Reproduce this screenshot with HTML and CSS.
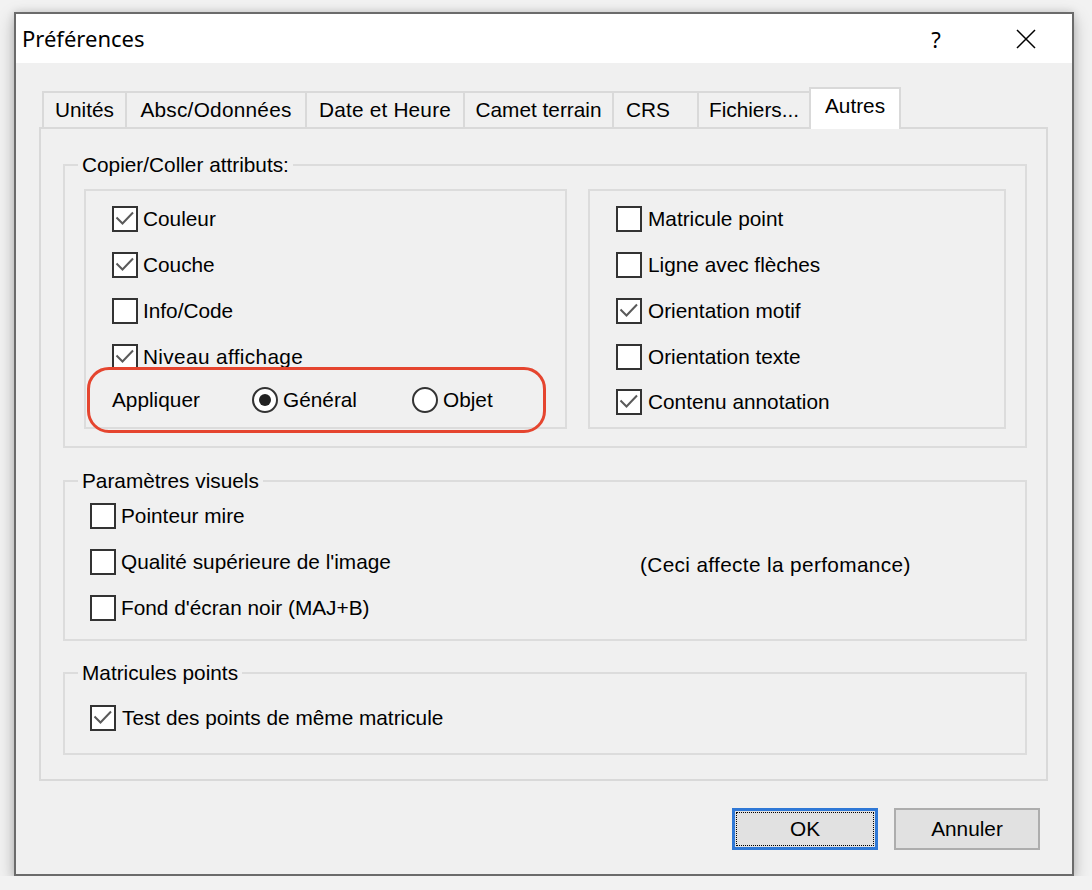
FILE: index.html
```html
<!DOCTYPE html>
<html lang="fr">
<head>
<meta charset="utf-8">
<title>Préférences</title>
<link rel="stylesheet" href="styles.css">
</head>
<body>
<div class="window">
  <div class="titlebar">
    <span class="title">Préférences</span>
    <span class="help">?</span>
    <svg class="close" width="20" height="20" viewBox="0 0 20 20"><path d="M1 1 L19 19 M19 1 L1 19" stroke="#000" stroke-width="1.5" fill="none"/></svg>
  </div>
  <div class="client">
    <div class="tabs">
      <div class="tab t-units">Unités</div>
      <div class="tab t-absc">Absc/Odonnées</div>
      <div class="tab t-date">Date et Heure</div>
      <div class="tab t-carnet">Camet terrain</div>
      <div class="tab t-crs">CRS</div>
      <div class="tab t-files">Fichiers...</div>
      <div class="tab t-other active">Autres</div>
    </div>
    <div class="panel">
      <fieldset class="group">
        <legend>Copier/Coller attributs:</legend>
        <div class="g1-body">
          <div class="subbox sub-left">
            <div class="row"><span class="cb checked"><svg viewBox="0 0 22 22"><path d="M2.5 9.5 L8.5 15.5 L19 4.5"/></svg></span><span>Couleur</span></div>
            <div class="row"><span class="cb checked"><svg viewBox="0 0 22 22"><path d="M2.5 9.5 L8.5 15.5 L19 4.5"/></svg></span><span>Couche</span></div>
            <div class="row"><span class="cb"></span><span>Info/Code</span></div>
            <div class="row"><span class="cb checked"><svg viewBox="0 0 22 22"><path d="M2.5 9.5 L8.5 15.5 L19 4.5"/></svg></span><span class="wide">Niveau affichage</span></div>
            <div class="apply-row">
              <span class="apply-label">Appliquer</span>
              <span class="radio-opt opt-general"><span class="rb on"></span><span>Général</span></span>
              <span class="radio-opt"><span class="rb"></span><span>Objet</span></span>
            </div>
            <div class="highlight"></div>
          </div>
          <div class="subbox sub-right">
            <div class="row"><span class="cb"></span><span>Matricule point</span></div>
            <div class="row"><span class="cb"></span><span>Ligne avec flèches</span></div>
            <div class="row"><span class="cb checked"><svg viewBox="0 0 22 22"><path d="M2.5 9.5 L8.5 15.5 L19 4.5"/></svg></span><span>Orientation motif</span></div>
            <div class="row"><span class="cb"></span><span>Orientation texte</span></div>
            <div class="row row-last"><span class="cb checked"><svg viewBox="0 0 22 22"><path d="M2.5 9.5 L8.5 15.5 L19 4.5"/></svg></span><span>Contenu annotation</span></div>
          </div>
        </div>
      </fieldset>
      <fieldset class="group group-visual">
        <legend>Paramètres visuels</legend>
        <div class="g2-body">
          <div class="row"><span class="cb"></span><span>Pointeur mire</span></div>
          <div class="row">
            <span class="row-main"><span class="cb"></span><span>Qualité supérieure de l'image</span></span>
            <span class="note">(Ceci affecte la perfomance)</span>
          </div>
          <div class="row"><span class="cb"></span><span>Fond d'écran noir (MAJ+B)</span></div>
        </div>
      </fieldset>
      <fieldset class="group group-points">
        <legend>Matricules points</legend>
        <div class="g3-body">
          <div class="row row-test"><span class="cb checked"><svg viewBox="0 0 22 22"><path d="M2.5 9.5 L8.5 15.5 L19 4.5"/></svg></span><span>Test des points de même matricule</span></div>
        </div>
      </fieldset>
    </div>
    <div class="buttons">
      <button class="btn btn-default"><span>OK</span></button>
      <button class="btn">Annuler</button>
    </div>
  </div>
</div>
</body>
</html>
```
FILE: styles.css
```css
* { box-sizing: border-box; }

body {
  margin: 0;
  background: #f2f2f2;
  font-family: "Liberation Sans", Arial, sans-serif;
  font-size: 20.8px;
  color: #000;
}

.window {
  margin: 12px 0 0 14px;
  width: 1060px;
  height: 864px;
  border: 2px solid #6b6b6b;
  background: #f0f0f0;
  box-shadow: 0 6px 16px rgba(0, 0, 0, 0.25), 0 0 8px rgba(0, 0, 0, 0.12);
  display: flex;
  flex-direction: column;
}

.titlebar {
  height: 49px;
  flex: none;
  background: #fff;
  display: flex;
  align-items: center;
  padding-left: 6px;
}

.title {
  flex: 1;
  font-family: "Noto Sans", "Open Sans", sans-serif;
  font-size: 22px;
  padding-bottom: 1px;
}

.help {
  width: 20px;
  text-align: center;
  font-family: "Noto Sans", sans-serif;
  font-size: 22px;
  margin-right: 70px;
}

.close {
  margin-right: 36px;
}

.client {
  flex: 1;
  padding: 24px 24px 0 23px;
  display: flex;
  flex-direction: column;
}

.tabs {
  display: flex;
  align-items: flex-end;
  height: 40px;
  padding-left: 3px;
  position: relative;
  z-index: 1;
}

.tab {
  height: 36px;
  border: 2px solid #d9d9d9;
  border-bottom: 0;
  background: #f0f0f0;
  display: flex;
  align-items: center;
  justify-content: center;
  margin-left: -2px;
  white-space: nowrap;
  padding-bottom: 1px;
}

.t-units { margin-left: 0; width: 85px; }
.t-absc { width: 182px; letter-spacing: 0.25px; }
.t-date { width: 160px; letter-spacing: 0.2px; }
.t-carnet { width: 151px; }
.t-crs { width: 87px; padding-right: 15px; }
.t-files { width: 114px; }
.t-other { width: 92px; }

.tab.active {
  height: 42px;
  margin-bottom: -2px;
  background: #fff;
  padding-bottom: 7px;
}

.panel {
  height: 654px;
  border: 2px solid #d9d9d9;
  background: #f0f0f0;
  padding: 24px 19px 24px 22px;
}

.group {
  margin: 0;
  padding: 0;
  border: 2px solid #dcdcdc;
  min-width: 0;
}

.group legend {
  margin-left: 13px;
  padding: 0 4px;
  line-height: 24px;
}

.group-visual { margin-top: 21px; }
.group-points { margin-top: 20px; }

.g1-body {
  display: grid;
  grid-template-columns: 483px 418px;
  column-gap: 21px;
  padding: 12px 19px 17px 19px;
}

.subbox {
  height: 240px;
  border: 2px solid #dcdcdc;
  padding: 5px 0 0 26px;
  position: relative;
}

.row {
  display: flex;
  align-items: center;
  height: 46px;
  gap: 5px;
  white-space: nowrap;
}

.sub-right .row { gap: 6px; }
.sub-right .row-last { height: 44px; }
.row-test { gap: 6px; }

.wide { letter-spacing: 0.35px; }

.cb {
  width: 26px;
  height: 26px;
  flex: none;
  border: 2px solid #333;
  background: #fff;
  display: inline-flex;
}

.cb svg {
  width: 22px;
  height: 22px;
  fill: none;
  stroke: #5a5a5a;
  stroke-width: 2;
}

.apply-row {
  display: flex;
  align-items: center;
  height: 40px;
  white-space: nowrap;
}

.apply-label { width: 140px; }

.radio-opt {
  display: flex;
  align-items: center;
  gap: 5px;
}

.opt-general { width: 160px; }

.rb {
  width: 26px;
  height: 26px;
  flex: none;
  border: 2px solid #333;
  border-radius: 50%;
  background: #fff;
  display: inline-flex;
  align-items: center;
  justify-content: center;
}

.rb.on::after {
  content: "";
  width: 12px;
  height: 12px;
  border-radius: 50%;
  background: #222;
}

.highlight {
  position: absolute;
  left: 1px;
  top: 176px;
  width: 459px;
  height: 66px;
  border: 3px solid #e5452f;
  border-radius: 22px;
  pointer-events: none;
}

.g2-body {
  padding: 0 0 8px 25px;
}

.row-main {
  display: flex;
  align-items: center;
  gap: 5px;
  width: 545px;
}

.note {
  padding-top: 6px;
  letter-spacing: 0.35px;
}

.g3-body {
  padding: 10px 0 12px 25px;
}

.buttons {
  display: flex;
  justify-content: flex-end;
  gap: 16px;
  padding: 27px 8px 0 0;
}

.btn {
  width: 146px;
  height: 42px;
  font: inherit;
  color: #000;
  background: #e1e1e1;
  border: 2px solid #adadad;
  padding: 0;
}

.btn-default {
  border: 3px solid #2f78d6;
  position: relative;
}

.btn-default::after {
  content: "";
  position: absolute;
  inset: 1px;
  border: 1px dotted #000;
}
```
